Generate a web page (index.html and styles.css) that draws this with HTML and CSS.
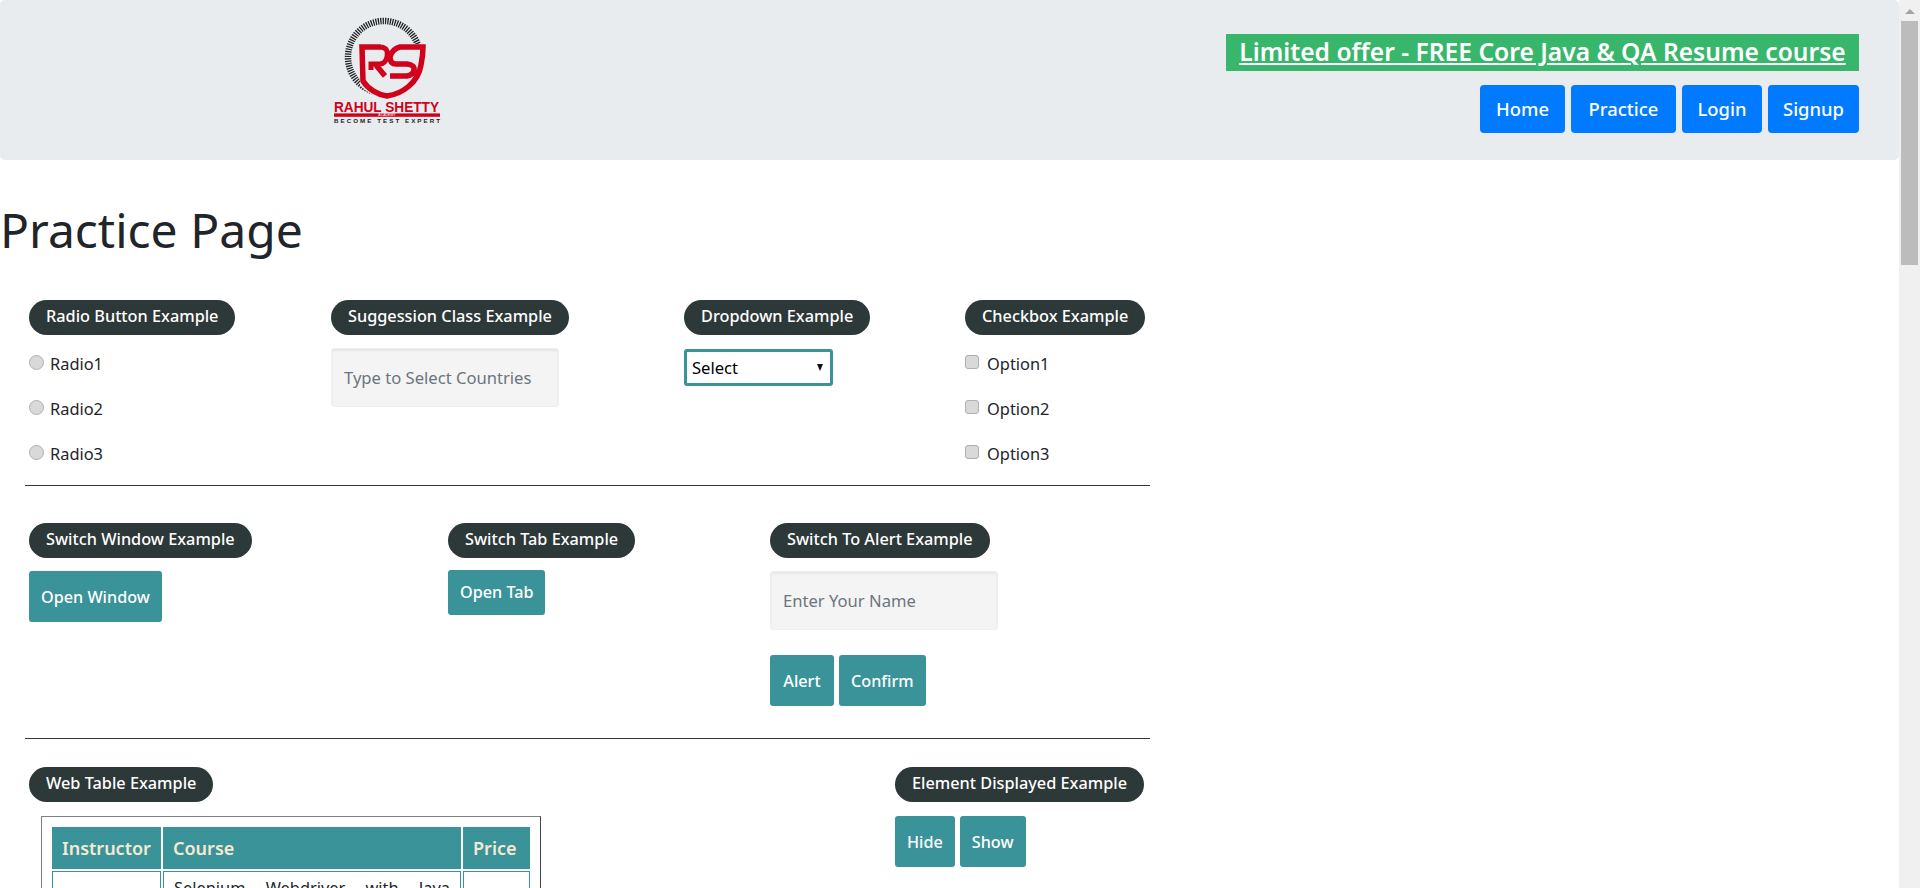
FILE: index.html
```html
<!DOCTYPE html>
<html lang="en">
<head>
    <meta charset="UTF-8">
    <meta name="viewport" content="width=device-width, initial-scale=1.0">
    <title>Practice Page</title>
    <link rel="stylesheet" href="styles.css">
</head>
<body>
    <div class="page">
        <!-- Header -->
        <header class="jumbotron">
            <svg class="logo" viewBox="0 0 116 112" width="116" height="112">
                <circle cx="54" cy="42" r="36" fill="none" stroke="#222" stroke-width="6.5" stroke-dasharray="1.3 1.1"/>
                <path d="M29 29 H96 Q97 58 88 66 Q72 84 56 84 Q38 80 30 70 Z" fill="#e9ecef"/>
                <path d="M51 32 H32 L33 66 C38 74 48 80 57 81 C72 79 88 68 91 50 Q93 40 93 32 H70 Q62 34 60 42 Q60 49 66 49 H77 Q85 50 84 55 Q83 60 77 61 H60" fill="none" stroke="#d0021b" stroke-width="5.5"/>
                <path d="M51 32 Q59 33 57 42 Q55 49 50 49 H41 V55" fill="none" stroke="#d0021b" stroke-width="5"/>
                <path d="M46 50 L55 61" fill="none" stroke="#d0021b" stroke-width="5.5"/>
                <text class="logo-name" x="4" y="97" textLength="105" lengthAdjust="spacingAndGlyphs">RAHUL SHETTY</text>
                <rect x="4" y="98.4" width="106" height="3.4" fill="#d0021b"/>
                <text class="logo-academy" x="57" y="101.4" text-anchor="middle">ACADEMY</text>
                <text class="logo-tag" x="4" y="108" textLength="106">BECOME TEST EXPERT</text>
            </svg>
            <div class="header-right">
                <a class="offer" href="#">Limited offer - FREE Core Java &amp; QA Resume course</a>
                <nav class="nav">
                    <a class="nav-btn" href="#">Home</a>
                    <a class="nav-btn" href="#">Practice</a>
                    <a class="nav-btn" href="#">Login</a>
                    <a class="nav-btn" href="#">Signup</a>
                </nav>
            </div>
        </header>

        <h1 class="title">Practice Page</h1>

        <div class="content">
            <section class="row row-one">
                <div class="block">
                    <span class="pill">Radio Button Example</span>
                    <label class="choice"><input type="radio" name="radio"> Radio1</label>
                    <label class="choice"><input type="radio" name="radio"> Radio2</label>
                    <label class="choice"><input type="radio" name="radio"> Radio3</label>
                </div>
                <div class="block">
                    <span class="pill">Suggession Class Example</span>
                    <input class="field" type="text" placeholder="Type to Select Countries">
                </div>
                <div class="block">
                    <span class="pill">Dropdown Example</span>
                    <span class="select-wrap">
                        <select class="select">
                            <option>Select</option>
                            <option>Option1</option>
                            <option>Option2</option>
                            <option>Option3</option>
                        </select>
                    </span>
                </div>
                <div class="block">
                    <span class="pill">Checkbox Example</span>
                    <label class="choice check"><input type="checkbox"> Option1</label>
                    <label class="choice check"><input type="checkbox"> Option2</label>
                    <label class="choice check"><input type="checkbox"> Option3</label>
                </div>
            </section>

            <section class="row row-two">
                <div class="block">
                    <span class="pill">Switch Window Example</span>
                    <button class="btn">Open Window</button>
                </div>
                <div class="block">
                    <span class="pill">Switch Tab Example</span>
                    <a class="btn btn-tab" href="#">Open Tab</a>
                </div>
                <div class="block">
                    <span class="pill">Switch To Alert Example</span>
                    <input class="field" type="text" placeholder="Enter Your Name">
                    <div class="btn-group alert-group">
                        <button class="btn">Alert</button>
                        <button class="btn">Confirm</button>
                    </div>
                </div>
            </section>

            <section class="row row-three">
                <div class="block">
                    <span class="pill">Web Table Example</span>
                    <div class="table-box">
                        <table class="courses">
                            <tr>
                                <th class="col-instructor">Instructor</th>
                                <th class="col-course">Course</th>
                                <th class="col-price">Price</th>
                            </tr>
                            <tr>
                                <td>Rahul Shetty</td>
                                <td class="justify">Selenium Webdriver with Java Basics + Advanced + Interview Guide</td>
                                <td>30</td>
                            </tr>
                        </table>
                    </div>
                </div>
                <div class="block">
                    <span class="pill">Element Displayed Example</span>
                    <div class="btn-group">
                        <button class="btn">Hide</button>
                        <button class="btn">Show</button>
                    </div>
                </div>
            </section>
        </div>
    </div>

    <!-- Scrollbar -->
    <div class="scrollbar">
        <span class="scroll-up"></span>
        <span class="scroll-thumb"></span>
    </div>
</body>
</html>
```

FILE: styles.css
```css
html, body {
    height: 100%;
    overflow: hidden;
}

body {
    margin: 0;
    display: flex;
    font-family: "Noto Sans", sans-serif;
    font-size: 16px;
    color: #212529;
    background-color: #fff;
}

.page {
    flex: 1;
    min-width: 0;
    height: 888px;
    overflow: hidden;
}

.scrollbar {
    width: 21px;
    height: 888px;
    background-color: #f0f0f0;
    display: flex;
    flex-direction: column;
    align-items: center;
}

.scroll-up {
    width: 0;
    height: 0;
    margin: 9px 0 7px;
    border-left: 5px solid transparent;
    border-right: 5px solid transparent;
    border-bottom: 5px solid #a3a3a3;
}

.scroll-thumb {
    width: 17px;
    height: 244px;
    background-color: #bcbcbc;
}

.jumbotron {
    height: 160px;
    box-sizing: border-box;
    padding: 15px 40px 0 330px;
    background-color: #e9ecef;
    border-radius: 5px;
    display: flex;
    justify-content: space-between;
    align-items: flex-start;
}

.logo-name {
    font-family: "Liberation Sans", sans-serif;
    font-size: 14px;
    font-weight: 700;
    fill: #d0021b;
}

.logo-academy {
    font-family: "Liberation Sans", sans-serif;
    font-size: 3.5px;
    fill: #fff;
}

.logo-tag {
    font-family: "Liberation Sans", sans-serif;
    font-size: 6.2px;
    font-weight: 700;
    fill: #222;
}

.header-right {
    padding-top: 19px;
    display: flex;
    flex-direction: column;
    align-items: flex-end;
    gap: 14px;
}

.offer {
    display: block;
    width: 633px;
    height: 37px;
    line-height: 36px;
    text-align: center;
    background-color: #38b66b;
    color: #fff;
    font-size: 24.6px;
    font-weight: 600;
    white-space: nowrap;
}

.nav {
    display: flex;
    gap: 6px;
}

.nav-btn {
    width: 85px;
    height: 48px;
    line-height: 47px;
    text-align: center;
    background-color: #007bff;
    color: #fff;
    border-radius: 4px;
    font-size: 18.4px;
    font-weight: 500;
    text-decoration: none;
}

.nav-btn:nth-child(2) {
    width: 105px;
}

.nav-btn:nth-child(3) {
    width: 80px;
}

.nav-btn:nth-child(4) {
    width: 91px;
}

.title {
    margin: 0;
    padding-top: 41px;
    height: 59px;
    line-height: 58px;
    font-size: 48px;
    font-weight: 400;
    color: #212529;
}

.content {
    width: 1125px;
    margin: 40px 0 0 25px;
}

.row {
    border-bottom: 1px solid #2d3838;
    display: grid;
    padding-left: 4px;
}

.row-one {
    grid-template-columns: 302px 353px 281px auto;
    height: 185px;
}

.row-two {
    grid-template-columns: 419px 322px auto;
    height: 215px;
    padding-top: 37px;
}

.row-three {
    grid-template-columns: 866px auto;
    padding-top: 28px;
    border-bottom: none;
}

.block {
    display: flex;
    flex-direction: column;
    align-items: flex-start;
}

.pill {
    height: 35px;
    line-height: 33px;
    padding: 0 17px;
    box-sizing: border-box;
    background-color: #2d3838;
    color: #fff;
    border-radius: 18px;
    font-size: 16.3px;
    font-weight: 500;
    white-space: nowrap;
}

.choice {
    height: 45px;
    display: flex;
    align-items: center;
    gap: 6px;
    font-size: 16.4px;
}

.choice:first-of-type {
    margin-top: 6px;
}

.choice input {
    appearance: none;
    width: 15px;
    height: 15px;
    margin: 0 0 3px;
    border: 1px solid #b0b0b0;
    background-color: #d9d9d9;
    box-sizing: border-box;
    border-radius: 50%;
}

.check {
    gap: 8px;
}

.choice.check input {
    width: 14px;
    height: 14px;
    border-radius: 3px;
}

.field {
    width: 228px;
    height: 59px;
    margin-top: 13px;
    padding: 0 12px;
    box-sizing: border-box;
    border: 1px solid #eee;
    border-radius: 3px;
    background-color: #f4f4f4;
    box-shadow: inset 0 2px 2px #e6e6e6;
    font-family: inherit;
    font-size: 16.6px;
}

.field::placeholder {
    color: #6c757d;
}

.select-wrap {
    position: relative;
    margin-top: 14px;
}

.select-wrap::after {
    content: "";
    position: absolute;
    top: 15px;
    right: 10px;
    border-left: 3.5px solid transparent;
    border-right: 3.5px solid transparent;
    border-top: 7px solid #111;
}

.select {
    appearance: none;
    display: block;
    width: 149px;
    height: 37px;
    padding: 0 5px;
    border: 3px solid #3a9399;
    border-radius: 3px;
    background-color: #fff;
    color: #000;
    font-family: inherit;
    font-size: 16.6px;
}

.btn {
    display: block;
    height: 51px;
    margin-top: 13px;
    padding: 0 12px;
    border: none;
    border-radius: 3px;
    background-color: #3a9399;
    color: #fff;
    font-family: inherit;
    font-size: 16.2px;
    font-weight: 500;
    text-decoration: none;
}

.btn-tab {
    height: 45px;
    line-height: 44px;
    margin-top: 12px;
}

.btn-group {
    display: flex;
    gap: 5px;
    margin-top: 14px;
}

.alert-group {
    margin-top: 25px;
}

.alert-group .btn {
    min-width: 64px;
}

.block > .btn-group:last-child .btn {
    margin-top: 0;
}

.table-box {
    width: 500px;
    box-sizing: border-box;
    margin: 14px 0 0 12px;
    padding: 8px;
    border: 1px solid;
    border-color: #808080 #444 #444 #808080;
}

.courses {
    width: 100%;
    border-collapse: separate;
    border-spacing: 2px;
}

.courses th {
    height: 42px;
    padding: 0 10px;
    background-color: #3a9399;
    color: #f5e9d3;
    font-size: 18px;
    font-weight: 600;
    text-align: left;
}

.courses td {
    padding: 4px 10px;
    border: 1px solid #3a9399;
    font-size: 16.4px;
    text-align: center;
}

.courses .justify {
    text-align: justify;
}

.col-instructor {
    width: 89px;
}

.col-price {
    width: 47px;
}
```
